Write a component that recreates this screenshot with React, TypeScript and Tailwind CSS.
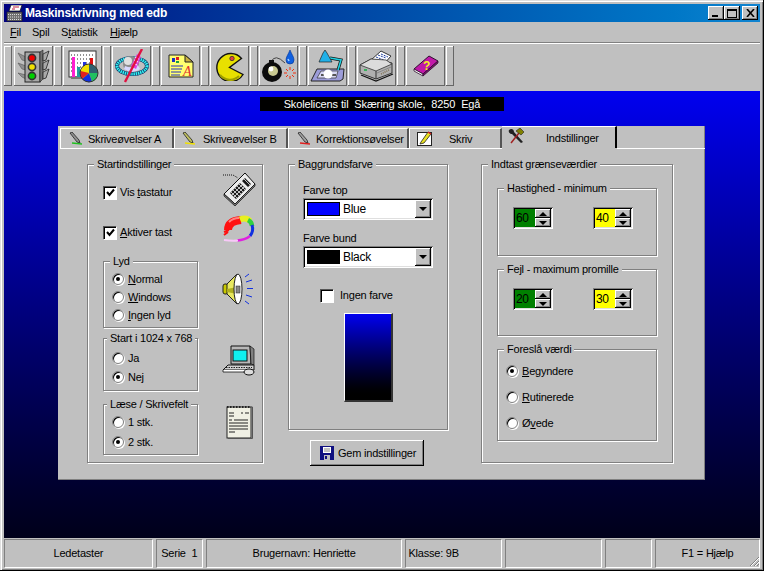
import React from "react";

const raised = "shadow-[inset_-1px_-1px_0_#000,inset_1px_1px_0_#fff,inset_-2px_-2px_0_#808080]";
const raisedThin = "shadow-[inset_-1px_-1px_0_#666,inset_1px_1px_0_#fff]";
const sunken = "shadow-[inset_1px_1px_0_#808080,inset_-1px_-1px_0_#fff,inset_2px_2px_0_#000,inset_-2px_-2px_0_#dfdfdf]";

function Group({ title, className, children, lx = 9 }: { title: string; className: string; children?: React.ReactNode; lx?: number }) {
  return (
    <div className={"relative border border-[#808080] shadow-[1px_1px_0_#fff,inset_1px_1px_0_#fff] " + className}>
      <span className="absolute -top-[9px] bg-[#c0c0c0] px-[3px] leading-[16px] whitespace-nowrap" style={{ left: lx - 3 }}>{title}</span>
      {children}
    </div>
  );
}

function Check({ on, label, className }: { on?: boolean; label: React.ReactNode; className?: string }) {
  return (
    <div className={"flex items-center h-[14px] " + (className || "")}>
      <div className="w-[13px] h-[13px] bg-white flex items-center justify-center shrink-0 border-t border-l border-t-[#555] border-l-[#555] shadow-[1px_1px_0_#fff,inset_1px_1px_0_#000]">
        {on && (
          <svg width="9" height="9" viewBox="0 0 9 9"><path d="M1 4 L3.5 7 L8 1.5" fill="none" stroke="#000" strokeWidth="2" /></svg>
        )}
      </div>
      {label}
    </div>
  );
}

function Radio({ on, label, className }: { on?: boolean; label: React.ReactNode; className?: string }) {
  return (
    <div className={"flex items-center h-[14px] " + (className || "")}>
      <div className="w-[12px] h-[12px] rounded-full bg-white flex items-center justify-center shrink-0 border border-[#808080] shadow-[inset_1px_1px_0_#000,1px_1px_0_#fff]">
        {on && <div className="w-[4px] h-[4px] rounded-full bg-black" />}
      </div>
      <span className="ml-[4px] whitespace-nowrap">{label}</span>
    </div>
  );
}

function Combo({ color, name, className }: { color: string; name: string; className?: string }) {
  return (
    <div className={"w-[130px] h-[22px] bg-white flex items-center pl-[4px] pr-[2px] " + sunken + " " + (className || "")}>
      <div className="w-[33px] h-[14px] border border-black" style={{ background: color }} />
      <span className="ml-[3px] flex-1 text-[12px] tracking-[-0.3px]">{name}</span>
      <div className={"w-[16px] h-[18px] bg-[#c0c0c0] flex items-center justify-center " + raised}>
        <div className="w-0 h-0 border-l-[4px] border-r-[4px] border-t-[4px] border-l-transparent border-r-transparent border-t-black" />
      </div>
    </div>
  );
}

function Spin({ value, bg, className }: { value: string; bg: string; className?: string }) {
  return (
    <div className={"w-[40px] h-[22px] flex p-[2px] " + sunken + " " + (className || "")} style={{ background: bg }}>
      <span className="flex-1 pl-[1px] leading-[18px] text-[12px] tracking-[-0.4px]">{value}</span>
      <div className="w-[16px] flex flex-col">
        <div className={"h-[9px] bg-[#c0c0c0] flex items-center justify-center " + raised}>
          <div className="w-0 h-0 border-l-[4px] border-r-[4px] border-b-[4px] border-l-transparent border-r-transparent border-b-black" />
        </div>
        <div className={"h-[9px] bg-[#c0c0c0] flex items-center justify-center " + raised}>
          <div className="w-0 h-0 border-l-[4px] border-r-[4px] border-t-[4px] border-l-transparent border-r-transparent border-t-black" />
        </div>
      </div>
    </div>
  );
}

/* ---------- icons ---------- */
const Traffic = () => (
  <svg width="36" height="34" viewBox="0 0 36 34">
    <path d="M2 4 L10 8 L10 12 L6 11Z M2 14 L10 17 L10 21 L6 20Z M2 24 L10 26 L10 30 L6 28Z" fill="#909090" stroke="#555" strokeWidth=".6" />
    <rect x="9" y="3" width="15" height="30" fill="#a8a8a8" stroke="#222" />
    <path d="M24 3 L27 1 L27 30 L24 33Z" fill="#707070" stroke="#222" strokeWidth=".6" />
    <path d="M27 5 L33 2 L30 11 L27 12Z M27 14 L33 11 L30 20 L27 21Z M27 23 L33 20 L30 29 L27 30Z" fill="#a8a8a8" stroke="#222" strokeWidth=".8" />
    <circle cx="16" cy="9" r="4.4" fill="#333" /><circle cx="16" cy="9" r="2.8" fill="#f00000" />
    <circle cx="16" cy="18" r="4.4" fill="#333" /><circle cx="16" cy="18" r="2.8" fill="#f0e000" />
    <circle cx="16" cy="27" r="4.4" fill="#333" /><circle cx="16" cy="27" r="2.8" fill="#00d000" />
  </svg>
);
const Chart = () => (
  <svg width="34" height="34" viewBox="0 0 34 34">
    <rect x="3" y="2" width="27" height="26" fill="#fff" stroke="#333" />
    <rect x="5" y="27" width="25" height="3" fill="#777" />
    <path d="M5 6H29M5 10H29M5 14H29M5 18H29M5 22H29" stroke="#222" strokeWidth="1" strokeDasharray="1 2" />
    <rect x="6" y="8" width="3" height="20" fill="#ff20d0" />
    <rect x="11" y="18" width="3" height="10" fill="#20a0a0" />
    <rect x="17" y="13" width="3" height="10" fill="#2030e0" />
    <rect x="24" y="9" width="3" height="11" fill="#e01010" />
    <circle cx="23" cy="24" r="9" fill="#f0e000" />
    <path d="M23 24 L23 15 A9 9 0 0 1 32 24Z" fill="#306070" />
    <path d="M23 24 L32 24 A9 9 0 0 1 26 32.5Z" fill="#20c060" />
    <path d="M23 24 L26 32.5 A9 9 0 0 1 16 30Z" fill="#1030e0" />
    <path d="M23 24 L16 30 A9 9 0 0 1 14.5 22Z" fill="#e02020" />
    <circle cx="23" cy="24" r="9" fill="none" stroke="#333" />
  </svg>
);
const Satellite = () => (
  <svg width="36" height="34" viewBox="0 0 36 34">
    <ellipse cx="18" cy="17" rx="15" ry="8" fill="none" stroke="#103060" strokeWidth="4" />
    <ellipse cx="18" cy="17" rx="15" ry="8" fill="none" stroke="#30f0f0" strokeWidth="3" strokeDasharray="1.5 .7" />
    <circle cx="17" cy="15" r="8" fill="#8c8c8c" />
    <circle cx="14" cy="12" r="4" fill="#e0e0e0" />
    <path d="M10 20 Q18 26 26 20 L24 16 Q18 20 11 17Z" fill="#d8d8ff" />
    <path d="M23 5 L27 8 L22 20 L17 17Z" fill="#e040e0" />
    <path d="M21 8 L25 10 M20 11 L24 13 M19 14 L23 16" stroke="#fff" />
    <path d="M28 0 L11 33" stroke="#e01040" strokeWidth="2.4" />
  </svg>
);
const Doc = () => (
  <svg width="26" height="24" viewBox="0 0 26 24" className="overflow-visible">
    <path d="M1 1 H17 L25 8 V23 H1Z" fill="#ffff70" stroke="#222" />
    <path d="M17 1 V8 H25Z" fill="#c8b040" stroke="#222" />
    <rect x="4" y="4" width="3" height="4" fill="#1a30c0" /><rect x="8" y="3" width="3" height="3" fill="#e02020" /><rect x="8" y="7" width="3" height="2" fill="#20a040" />
    <path d="M3 12 H15 M3 15 H14 M3 18 H13 M3 21 H12" stroke="#2030c0" strokeWidth="1" />
    <text x="15" y="22" fontSize="14" fontStyle="italic" fontFamily="Liberation Serif" fill="#e03030">A</text>
  </svg>
);
const Pacman = () => (
  <svg width="30" height="30" viewBox="0 0 30 30">
    <path d="M26.5 7.5 A14 14 0 1 0 28 23.5 L14.5 16.5 Z" fill="#e8e000" stroke="#111" strokeWidth="1.4" />
    <path d="M5 24 A13 13 0 0 0 24 25" fill="none" stroke="#a0a000" strokeWidth="2" />
    <circle cx="17" cy="7.5" r="2.2" fill="#e04040" stroke="#333" strokeWidth=".8" />
  </svg>
);
const Bomb = () => (
  <svg width="36" height="34" viewBox="0 0 36 34">
    <path d="M10 13 Q14 4 24 14" fill="none" stroke="#444" />
    <rect x="8" y="11" width="5" height="4" fill="#111" />
    <circle cx="11" cy="23" r="10" fill="#0c0c0c" />
    <circle cx="12" cy="22" r="5" fill="#c8c890" />
    <circle cx="10" cy="20" r="2.4" fill="#fff" />
    <path d="M29 1 C27 6 25 8 25 11 A4 4 0 0 0 33 11 C33 8 31 6 29 1Z" fill="#1060e0" stroke="#003090" strokeWidth=".6" />
    <path d="M27 10 L28 12" stroke="#a0d0ff" strokeWidth="1.5" />
    <path d="M29 18V21M29 27V30M23 24H26M32 24H35M25 20L27 22M33 20L31 22M25 28L27 26M33 28L31 26" stroke="#f03010" />
  </svg>
);
const Lamp = () => (
  <svg width="36" height="34" viewBox="0 0 36 34">
    <path d="M1 32 L7 20 H34 L33 30 L30 32Z" fill="#9c9cd8" stroke="#222" />
    <path d="M7 29 L11 22 H28 L26 29Z" fill="#d8d8f4" stroke="#333" strokeWidth=".7" />
    <path d="M11 26 H26" stroke="#555" strokeWidth="2" />
    <circle cx="18" cy="25" r="4.5" fill="#fff" />
    <path d="M20 9 L31 11 L28 21" fill="none" stroke="#111" strokeWidth="3" />
    <path d="M20 9 L31 11 L28 21" fill="none" stroke="#20d0e0" strokeWidth="1.6" />
    <path d="M15 1 L17 4 L22 13 H9 L13 4Z" fill="#20b0e8" stroke="#222" strokeWidth=".7" />
  </svg>
);
const Printer = () => (
  <svg width="36" height="32" viewBox="0 0 36 32">
    <path d="M12 10 L22 1 L32 6 L25 14Z" fill="#fff" stroke="#333" />
    <path d="M19 5 L27 8 M17 7 L25 10 M22 4 L29 7" stroke="#2040a0" strokeDasharray="2 1" />
    <path d="M1 15 L12 9 L33 13 V23 L17 29 L1 23Z" fill="#b0b0b0" stroke="#333" />
    <path d="M1 15 L17 21 L33 14 L27 10 L12 9Z" fill="#dcdcdc" stroke="#333" strokeWidth=".8" />
    <path d="M17 21 V29" stroke="#333" />
    <path d="M18 23 L32 17" stroke="#888" />
    <path d="M5 20 H8" stroke="#10b040" strokeWidth="1.5" />
    <path d="M22 24 L30 20" stroke="#807050" strokeDasharray="1 1" strokeWidth="1.5" />
    <path d="M2 25 L17 31 L34 24" fill="none" stroke="#111" strokeWidth="1.2" />
  </svg>
);
const Book = () => (
  <svg width="26" height="22" viewBox="0 0 26 22">
    <path d="M1 14 L16 1 L25 6 L10 19Z" fill="#c018a8" stroke="#301030" />
    <path d="M1 14 V16 L10 21 V19Z" fill="#fff" stroke="#301030" strokeWidth=".8" />
    <path d="M10 19 V21 L25 8 V6Z" fill="#801070" stroke="#301030" strokeWidth=".8" />
    <text x="10" y="15" fontSize="12" fontWeight="700" fontFamily="Liberation Sans" fill="#f0f020">?</text>
  </svg>
);
const Keyboard = () => (
  <svg width="34" height="34" viewBox="0 0 34 34">
    <path d="M1 3 H11 L16 6" fill="none" stroke="#111" strokeDasharray="1 1" />
    <path d="M2 22 L23 1 L33 12 L13 32Z" fill="#ececec" stroke="#111" />
    <path d="M2 22 V24 L13 34 L33 14 V12 L13 32Z" fill="#777" stroke="#111" strokeWidth=".7" />
    <path d="M8 21 L18 11 L24 17 L14 27Z M20 9 L23 6 L29 12 L26 15Z" fill="#1a1a1a" />
    <path d="M9 20 L15 26 M11 18 L17 24 M13 16 L19 22 M15 14 L21 20 M17 12 L23 18 M10 23 L20 13 M12 25 L22 15 M22 7 L28 13" stroke="#eee" strokeWidth=".8" />
  </svg>
);
const Ring = () => (
  <svg width="34" height="28" viewBox="0 0 34 28">
    <path d="M6 15 Q6 6 19 5" fill="none" stroke="#ff1010" strokeWidth="8" />
    <path d="M7 7 Q11 3 17 3" fill="none" stroke="#ff8080" strokeWidth="2" />
    <path d="M2 17 L7 15 M2 20 L6 17" stroke="#ff1010" strokeWidth="2" />
    <path d="M18 4.5 Q24 2 28 6" fill="none" stroke="#e8f020" strokeWidth="6" />
    <path d="M26 5 Q30 7 30 11" fill="none" stroke="#30d040" strokeWidth="4.5" />
    <path d="M30 10 Q32 16 28 21" fill="none" stroke="#1030e0" strokeWidth="3" />
    <path d="M28 21 Q23 25 15 25.5" fill="none" stroke="#e020e0" strokeWidth="2.5" />
    <path d="M16 25.5 Q9 26 2 25" fill="none" stroke="#f8c8f8" strokeWidth="2" />
  </svg>
);
const Speaker = () => (
  <svg width="34" height="34" viewBox="0 0 34 34">
    <rect x="1" y="12" width="5" height="10" rx="2" fill="#c8c800" stroke="#222" />
    <path d="M5 12 L15 2 V32 L5 22Z" fill="#e8e860" stroke="#222" />
    <path d="M5 17 L15 15 V22 L5 20Z" fill="#b0b020" />
    <ellipse cx="16" cy="17" rx="4" ry="15" fill="#fff" stroke="#222" />
    <rect x="14" y="14" width="4" height="7" fill="#888" stroke="#222" strokeWidth=".5" />
    <path d="M23 5 L27 2 M24 10 L30 8 M25 16.5 H31 M24 23 L30 25 M23 29 L27 32" stroke="#1030e0" />
  </svg>
);
const Computer = () => (
  <svg width="34" height="32" viewBox="0 0 34 32">
    <path d="M9 1 H28 L29 19 H9Z" fill="#b8b8b8" stroke="#111" />
    <rect x="11" y="5" width="14" height="11" fill="#10f0f0" stroke="#111" />
    <path d="M28 1 L32 4 V20 L29 19Z" fill="#808080" stroke="#111" strokeWidth=".7" />
    <path d="M6 20 H32 V25 H1Z" fill="#d0d0d0" stroke="#111" />
    <path d="M4 22.5 H30" stroke="#222" strokeDasharray="1.5 1" />
    <path d="M1 25 L1 27 H24 V25" fill="#fff" stroke="#111" strokeWidth=".8" />
    <ellipse cx="27" cy="27" rx="5" ry="3" fill="#ddd" stroke="#111" />
  </svg>
);
const Notepad = () => (
  <svg width="28" height="34" viewBox="0 0 28 34">
    <rect x="2" y="2" width="24" height="31" fill="#f0f0e4" stroke="#222" />
    <path d="M26 2 H27.5 V33.5 H3" fill="none" stroke="#555" />
    <path d="M2 2 H26" stroke="#222" strokeWidth="2" strokeDasharray="1.5 1.5" />
    <path d="M4 8 H9 M4 11 H9 M16 8 H18 M20 8 H24 M9 15 H23 M4 15 H7 M4 18 H23 M4 21 H23 M4 24 H23 M4 27 H10" stroke="#222" />
  </svg>
);
const Floppy = () => (
  <svg width="14" height="14" viewBox="0 0 14 14">
    <path d="M0 0 H14 V14 H0Z" fill="#101080" />
    <rect x="3" y="1" width="8" height="6" fill="#fff" />
    <path d="M4 3 H10 M4 5 H10" stroke="#888" />
    <rect x="4" y="9" width="6" height="5" fill="#c0c0c0" />
    <rect x="5" y="10" width="2" height="3" fill="#101080" />
  </svg>
);
const Tools = () => (
  <svg width="17" height="16" viewBox="0 0 17 16">
    <path d="M1 2 C3 0 6 1 6 4 L15 14 L13 15 L4 6 C2 6 0 4 1 2Z" fill="#222" />
    <path d="M3 15 L11 5" stroke="#a02020" strokeWidth="1.5" />
    <path d="M8 3 L12 0 L16 4 L13 7Z" fill="#808000" stroke="#222" strokeWidth=".6" />
  </svg>
);
const Pencil = ({ line, tone }: { line: string; tone: string }) => (
  <svg width="14" height="14" viewBox="0 0 14 14">
    <path d="M1 1 L3 0 L10 8 L11 11 L8 10Z" fill={tone} stroke="#222" strokeWidth=".8" />
    <path d="M3 11 L13 12" stroke={line} strokeWidth="1.5" />
  </svg>
);
const PencilPage = () => (
  <svg width="15" height="15" viewBox="0 0 15 15">
    <rect x="0.5" y="1.5" width="14" height="13" fill="#fff" stroke="#222" />
    <path d="M4 11 L11 1 L14 3 L7 12 L3 13Z" fill="#e8e020" stroke="#222" strokeWidth=".8" />
    <path d="M11 1 L14 3" stroke="#e02020" strokeWidth="1.5" />
  </svg>
);
const TitleIcon = () => (
  <svg width="17" height="17" viewBox="0 0 17 17">
    <path d="M5 0 H16 L14 6 H3Z" fill="#fff" stroke="#111" strokeWidth=".7" />
    <path d="M7 2 H13 M6 4 H9" stroke="#c02040" />
    <rect x="1" y="7" width="15" height="9" fill="#707070" stroke="#222" strokeWidth=".7" />
    <path d="M2 9.5 H15 M2 12 H15 M2 14.5 H15" stroke="#ddd" strokeDasharray="1 1" />
  </svg>
);

function Tab({ w, icon, iconOffset, textOffset, label }: { w: number; icon: React.ReactNode; iconOffset: number; textOffset: number; label: string }) {
  return (
    <div className="relative h-[20px] mt-[2px] shrink-0 border-t border-l border-white border-r-2 border-r-[#555] flex items-center" style={{ width: w }}>
      <span className="shrink-0" style={{ marginLeft: iconOffset }}>{icon}</span>
      <span className="absolute whitespace-nowrap top-[2px] leading-[16px]" style={{ left: textOffset }}>{label}</span>
    </div>
  );
}

const tools = [<Traffic />, <Chart />, <Satellite />, <Doc />, <Pacman />, <Bomb />, <Lamp />, <Printer />, <Book />];

export default function App() {
  return (
    <div
      className="w-[764px] h-[571px] overflow-hidden bg-[#c0c0c0] flex flex-col text-[11px] tracking-[-0.22px] text-black pt-[4px] px-[4px] pb-[3px] shadow-[inset_-1px_-1px_0_#000,inset_1px_1px_0_#dfdfdf,inset_2px_2px_0_#fff,inset_-2px_-2px_0_#808080]"
      style={{ fontFamily: '"Liberation Sans", Arial, sans-serif' }}
    >
      {/* title */}
      <div className="h-[18px] shrink-0 flex items-center bg-gradient-to-r from-[#000080] to-[#1084d0] pl-[2px] pr-[2px]">
        <TitleIcon />
        <span className="ml-[2px] text-white font-bold text-[12px] tracking-[-0.2px] flex-1">Maskinskrivning med edb</span>
        <div className={"w-[16px] h-[14px] bg-[#c0c0c0] flex items-end pl-[4px] pb-[3px] " + raised}><div className="w-[6px] h-[2px] bg-black" /></div>
        <div className={"w-[16px] h-[14px] bg-[#c0c0c0] flex items-center justify-center " + raised}><div className="w-[10px] h-[9px] border border-black border-t-2" /></div>
        <div className={"w-[16px] h-[14px] bg-[#c0c0c0] ml-[2px] flex items-center justify-center " + raised}>
          <svg width="9" height="8" viewBox="0 0 9 8"><path d="M1 0 L8 8 M8 0 L1 8" stroke="#000" strokeWidth="1.6" /></svg>
        </div>
      </div>
      {/* menu */}
      <div className="h-[20px] shrink-0 flex items-center pl-[6px] leading-[20px]">
        <span className="w-[22px]"><u>F</u>il</span>
        <span className="w-[29px]">Spil</span>
        <span className="w-[49px]">S<u>t</u>atistik</span>
        <span><u>H</u>jælp</span>
      </div>
      <div className="h-[2px] shrink-0 bg-white border-t border-[#808080]" />
      {/* toolbar */}
      <div className="h-[47px] shrink-0 flex items-start pt-[2px] gap-[1px]">
        <div className={"w-[8px] h-[40px] mr-px bg-[#c0c0c0] " + raisedThin} />
        {tools.map((t, i) => (
          <React.Fragment key={i}>
            <div className={"w-[39px] h-[40px] bg-[#c0c0c0] flex items-center justify-center " + raisedThin}>{t}</div>
            <div className={"w-[8px] h-[40px] bg-[#c0c0c0] " + raisedThin} />
          </React.Fragment>
        ))}
      </div>
      {/* desktop */}
      <div className="flex-1 flex flex-col items-center bg-gradient-to-b from-[#0000f0] to-[#00001a] pt-[6px]">
        <div className="w-[244px] h-[14px] bg-black text-white text-center leading-[14px] tracking-[-0.12px] whitespace-pre">Skolelicens til  Skæring skole,  8250  Egå</div>
        <div className="w-[647px] h-[354px] mt-[15px] mr-[1px] bg-[#c0c0c0] flex flex-col shadow-[inset_-1px_-1px_0_#808080]">
          {/* tabs */}
          <div className="h-[22px] shrink-0 flex pl-[2px]">
            <Tab w={114} icon={<Pencil line="#20c020" tone="#909090" />} iconOffset={8} textOffset={27} label="Skriveøvelser A" />
            <Tab w={114} icon={<Pencil line="#f0e000" tone="#c0c060" />} iconOffset={7} textOffset={28} label="Skriveøvelser B" />
            <Tab w={121} icon={<Pencil line="#e02020" tone="#a0a0a0" />} iconOffset={8} textOffset={27} label="Korrektionsøvelser" />
            <Tab w={93} icon={<PencilPage />} iconOffset={7} textOffset={39} label="Skriv" />
            <div className="relative w-[115px] h-[22px] shrink-0 border-r-2 border-black border-t border-t-white">
              <span className="absolute left-[6px] top-[1px]"><Tools /></span>
              <span className="absolute left-[44px] top-[3px] leading-[16px]">Indstillinger</span>
            </div>
          </div>
          <div className="h-px flex shrink-0 pl-[2px]">
            <div className="w-[442px] bg-white" />
            <div className="w-[115px]" />
            <div className="flex-1 bg-white" />
          </div>
          {/* body */}
          <div className="flex-1 flex pl-[29px] pt-[15px] items-start">
            <Group title="Startindstillinger" className="w-[176px] h-[299px] shrink-0 flex pl-[15px]">
              <div className="w-[119px] shrink-0">
                <Check on className="mt-[20px]" label={<span className="ml-[4px]">Vis <u>t</u>astatur</span>} />
                <Check on className="mt-[26px]" label={<span className="ml-[4px]"><u>A</u>ktiver tast</span>} />
                <Group title="Lyd" className="w-[95px] h-[67px] mt-[22px] pl-[8px] pt-[10px]">
                  <Radio on label={<><u>N</u>ormal</>} />
                  <Radio className="mt-[4px]" label={<><u>W</u>indows</>} />
                  <Radio className="mt-[4px]" label={<><u>I</u>ngen lyd</>} />
                </Group>
                <Group title="Start i 1024 x 768" lx={6} className="w-[95px] h-[53px] mt-[10px] pl-[8px] pt-[12px]">
                  <Radio label="Ja" />
                  <Radio on className="mt-[5px]" label="Nej" />
                </Group>
                <Group title="Læse / Skrivefelt" lx={6} className="w-[95px] h-[51px] mt-[13px] pl-[8px] pt-[10px]">
                  <Radio label="1 stk." />
                  <Radio on className="mt-[6px]" label="2 stk." />
                </Group>
              </div>
              <div className="w-[34px] flex flex-col items-center">
                <div className="mt-[7px] h-[34px]"><Keyboard /></div>
                <div className="mt-[9px] h-[28px]"><Ring /></div>
                <div className="mt-[29px] h-[34px]"><Speaker /></div>
                <div className="mt-[39px] h-[32px]"><Computer /></div>
                <div className="mt-[28px] h-[34px]"><Notepad /></div>
              </div>
            </Group>
            <div className="w-[160px] ml-[25px] shrink-0">
              <Group title="Baggrundsfarve" className="h-[266px] pl-[14px] pt-[17px]">
                <div className="leading-[16px]">Farve top</div>
                <Combo color="#0000ff" name="Blue" />
                <div className="mt-[10px] leading-[16px]">Farve bund</div>
                <Combo color="#000000" name="Black" />
                <Check className="ml-[17px] mt-[20px]" label={<span className="ml-[7px]">Ingen farve</span>} />
                <div className="w-[49px] h-[89px] ml-[41px] mt-[11px] border-t border-l border-t-[#fff] border-l-[#fff] border-r-2 border-b-2 border-[#333] bg-gradient-to-b from-[#0000f0] to-black" />
              </Group>
              <div className={"w-[114px] h-[26px] mt-[10px] ml-[22px] bg-[#c0c0c0] flex items-center pl-[10px] whitespace-nowrap " + raised}>
                <Floppy />
                <span className="ml-[4px]">Gem indstillinger</span>
              </div>
            </div>
            <Group title="Indtast grænseværdier" className="w-[192px] h-[299px] ml-[33px] shrink-0 pl-[15px] pt-[23px]">
              <Group title="Hastighed - minimum" className="w-[160px] h-[68px] pt-[18px] pl-[15px] flex">
                <Spin value="60" bg="#008000" />
                <Spin value="40" bg="#ffff00" className="ml-[40px]" />
              </Group>
              <Group title="Fejl - maximum promille" className="w-[160px] h-[67px] mt-[13px] pt-[18px] pl-[15px] flex">
                <Spin value="20" bg="#008000" />
                <Spin value="30" bg="#ffff00" className="ml-[40px]" />
              </Group>
              <Group title="Foreslå værdi" className="w-[160px] h-[92px] mt-[13px] pl-[8px] pt-[14px]">
                <Radio on label={<><u>B</u>egyndere</>} />
                <Radio className="mt-[12px]" label={<><u>R</u>utinerede</>} />
                <Radio className="mt-[12px]" label={<>Ø<u>v</u>ede</>} />
              </Group>
            </Group>
          </div>
        </div>
      </div>
      {/* status bar */}
      <div className="h-[30px] shrink-0 flex items-stretch gap-[3px] pt-px relative">
        {[
          [149, "Ledetaster", "center"],
          [47, "Serie  1", "center"],
          [197, "Brugernavn: Henriette", "center"],
          [97, "Klasse: 9B", "left"],
          [97, "", "left"],
          [47, "", "left"],
          [105, "F1 = Hjælp", "center"],
        ].map(([w, t, a], i) => (
          <div
            key={i}
            className="h-[29px] flex items-center px-[2px] whitespace-pre border-t border-l border-[#808080] border-r border-b border-r-white border-b-white"
            style={{ width: w as number, justifyContent: a === "center" ? "center" : "flex-start" }}
          >
            {t}
          </div>
        ))}
        <svg className="absolute right-0 bottom-[1px]" width="12" height="12" viewBox="0 0 12 12">
          <path d="M11 2 L2 11 M11 6 L6 11 M11 9 L9 11" stroke="#808080" />
          <path d="M11 3 L3 11 M11 7 L7 11" stroke="#fff" />
        </svg>
      </div>
    </div>
  );
}
